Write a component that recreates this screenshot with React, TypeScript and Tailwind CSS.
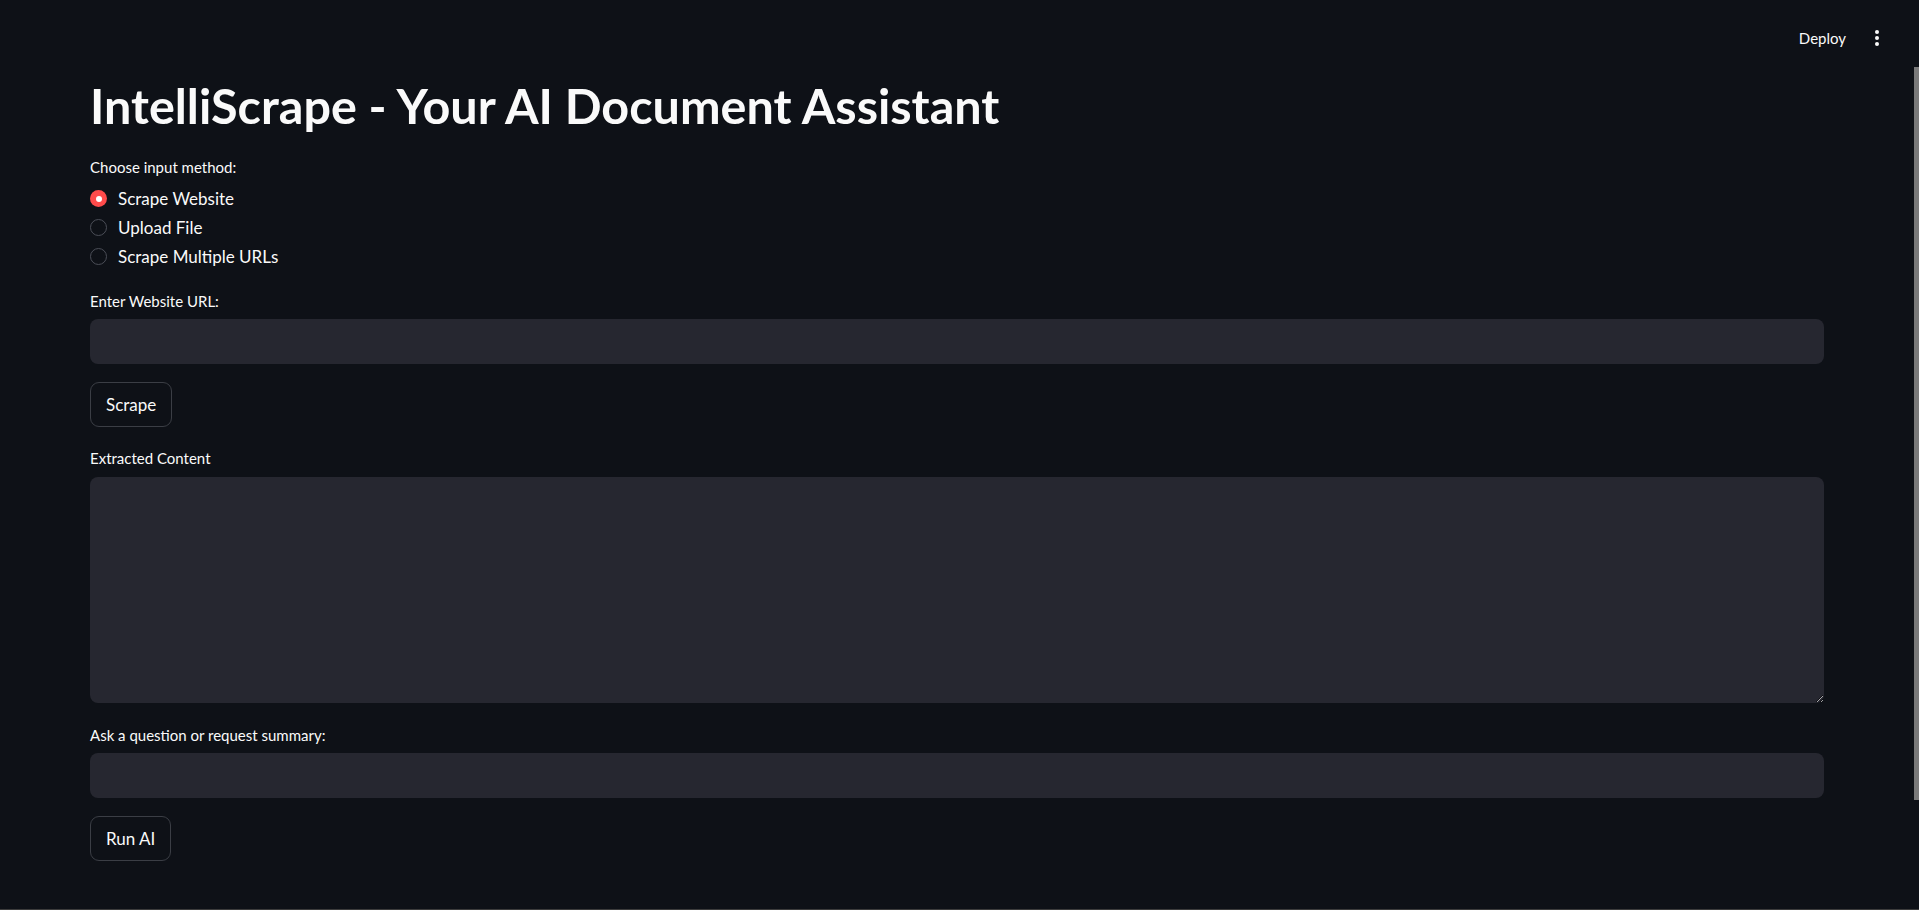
const Label = ({ children, className = "" }: { children: string; className?: string }) => (
  <div className={"h-[20px] text-[15px] leading-[20px] text-[#fafafa] " + className}>{children}</div>
)

const Radio = ({ label, checked }: { label: string; checked?: boolean }) => (
  <div className="flex h-[29px] items-center gap-[11px]">
    {checked ? (
      <span className="flex h-[17px] w-[17px] items-center justify-center rounded-full bg-[#ff4b4b]">
        <span className="h-[6px] w-[6px] rounded-full bg-white" />
      </span>
    ) : (
      <span className="h-[17px] w-[17px] rounded-full border-[1.5px] border-[#4b4e57]" />
    )}
    <span className="text-[17px] text-[#fafafa]">{label}</span>
  </div>
)

const Button = ({ children, className = "" }: { children: string; className?: string }) => (
  <button className={"h-[45px] rounded-[9px] border border-[#3b3e45] bg-[#0e1117] px-[15px] text-[17px] text-[#fafafa] " + className}>
    {children}
  </button>
)

export default function App() {
  return (
    <div className="flex h-[910px] w-full flex-col overflow-hidden bg-[#0e1117] font-['Lato',sans-serif]">
      <div className="flex min-h-0 flex-1">
        <div className="flex min-w-0 flex-1 flex-col">
          <header className="flex h-[76px] items-center justify-end pr-[35px]">
            <span className="text-[15px] text-[#fafafa]">Deploy</span>
            <span className="ml-[29px] flex flex-col items-center gap-[2px]">
              <span className="h-[4px] w-[4px] rounded-full bg-[#fafafa]" />
              <span className="h-[4px] w-[4px] rounded-full bg-[#fafafa]" />
              <span className="h-[4px] w-[4px] rounded-full bg-[#fafafa]" />
            </span>
          </header>

          <main className="flex flex-col pl-[90px] pr-[90px]">
            <h1 className="mt-0 text-[48.5px] font-bold leading-[58px] text-[#fafafa]">
              IntelliScrape - Your AI Document Assistant
            </h1>

            <Label className="mt-[23px]">Choose input method:</Label>
            <div className="mt-[7px] flex flex-col">
              <Radio label="Scrape Website" checked />
              <Radio label="Upload File" />
              <Radio label="Scrape Multiple URLs" />
            </div>

            <Label className="mt-[20px]">Enter Website URL:</Label>
            <input className="mt-[8px] h-[45px] w-full rounded-[8px] bg-[#262730] px-3 text-[#fafafa] outline-none" />
            <div className="mt-[18px]">
              <Button>Scrape</Button>
            </div>

            <Label className="mt-[21px]">Extracted Content</Label>
            <textarea className="mt-[9px] h-[226px] w-full resize-y rounded-[8px] bg-[#262730] p-3 text-[#fafafa] outline-none [color-scheme:dark]" />

            <Label className="mt-[22px]">Ask a question or request summary:</Label>
            <input className="mt-[8px] h-[45px] w-full rounded-[8px] bg-[#262730] px-3 text-[#fafafa] outline-none" />
            <div className="mt-[18px]">
              <Button>Run AI</Button>
            </div>
          </main>
        </div>
        <div className="w-[5px] pt-[67px]">
          <div className="h-[733px] w-full bg-[#7a7a7a]" />
        </div>
      </div>
      <div className="h-[1px] w-full bg-[#3c3c3c]" />
    </div>
  )
}
